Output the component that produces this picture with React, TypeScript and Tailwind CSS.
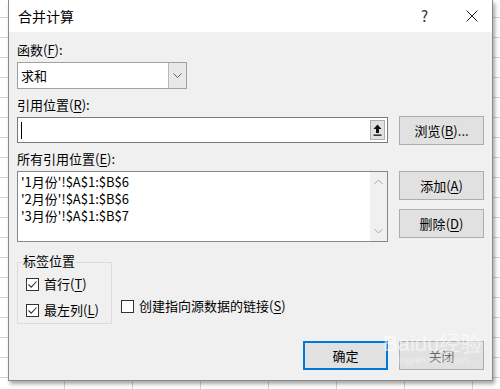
const FONT = "font-['Microsoft_YaHei_UI','Noto_Sans_CJK_SC','Noto_Sans',sans-serif]";

function Mn({ c }: { c: string }) {
  return (
    <>
      (<span className="underline underline-offset-2">{c}</span>)
    </>
  );
}

function WinButton({ children, primary = false, faded = false }: { children: React.ReactNode; primary?: boolean; faded?: boolean }) {
  return (
    <div
      className={`flex h-[29px] w-[85px] items-center justify-center bg-[#e1e1e1] text-[13px] ${
        primary ? 'border-2 border-[#0078d7]' : 'border border-[#adadad]'
      } ${faded ? 'text-[#6d6d6d]' : 'text-black'}`}
    >
      {children}
    </div>
  );
}

function CheckBox({ checked, label }: { checked: boolean; label: React.ReactNode }) {
  return (
    <div className="flex items-center gap-[5px] text-[13px] leading-[18px]">
      <div className="flex h-[13px] w-[13px] items-center justify-center border border-[#333] bg-white">
        {checked && (
          <svg width="11" height="11" viewBox="0 0 11 11">
            <path d="M1.5 5.5 L4.2 8.2 L9.5 2.5" fill="none" stroke="#333" strokeWidth="1.1" />
          </svg>
        )}
      </div>
      <span>{label}</span>
    </div>
  );
}

export default function App() {
  return (
    <div
      className={`${FONT} h-[389px] w-[500px] overflow-hidden bg-white bg-[linear-gradient(#d4d4d4_1px,transparent_1px),linear-gradient(90deg,#d4d4d4_1px,transparent_1px)] bg-[size:68px_20px] bg-[position:-4px_-3px]`}
    >
      <div className="relative ml-[8px] flex h-[381px] w-[485px] flex-col border-r border-b border-l border-[#8a8a8a] bg-[#f0f0f0] text-black shadow-[2px_3px_4px_rgba(0,0,0,0.35)]">
        {/* title bar */}
        <div className="flex h-[32px] items-center bg-white pl-[9px] pr-[14px]">
          <span className="text-[14px]">合并计算</span>
          <span className="ml-auto mr-[38px] text-[15px] text-[#333]">?</span>
          <svg width="12" height="12" viewBox="0 0 12 12">
            <path d="M0.5 0.5 L11.5 11.5 M11.5 0.5 L0.5 11.5" stroke="#222" strokeWidth="1" />
          </svg>
        </div>

        <div className="flex flex-col px-[8px]">
          <div className="mt-[9px] h-[18px] text-[13px] leading-[18px]">
            函数<Mn c="F" />:
          </div>
          <div className="mt-[3px] flex h-[27px] w-[170px] border border-[#a0a0a0] bg-white">
            <div className="flex-1 pl-[3px] text-[13px] leading-[25px]">求和</div>
            <div className="flex w-[18px] items-center justify-center border-l border-[#b8b8b8] bg-[#e8e8e8]">
              <svg width="9" height="6" viewBox="0 0 9 6">
                <path d="M0.5 0.5 L4.5 4.5 L8.5 0.5" fill="none" stroke="#606060" strokeWidth="1" />
              </svg>
            </div>
          </div>

          <div className="mt-[7px] h-[18px] text-[13px] leading-[18px]">
            引用位置<Mn c="R" />:
          </div>
          <div className="mt-[3px] flex gap-[11px]">
            <div className="flex h-[26px] w-[374px] items-stretch border border-[#7a7a7a] bg-white">
              <div className="flex flex-1 items-center pl-[3px]">
                <div className="h-[17px] w-px bg-black" />
              </div>
              <div className="m-[2px] flex w-[15px] items-center justify-center border border-[#adadad] bg-[#e1e1e1]">
                <svg width="9" height="12" viewBox="0 0 9 12">
                  <path d="M4.5 0.5 L8.5 5 L6 5 L6 9 L3 9 L3 5 L0.5 5 Z" fill="#111" />
                  <rect x="0.5" y="10.5" width="8" height="1.3" fill="#111" />
                </svg>
              </div>
            </div>
            <div className="-mt-px">
              <WinButton>
                浏览<Mn c="B" />...
              </WinButton>
            </div>
          </div>

          <div className="mt-[5px] h-[18px] text-[13px] leading-[18px]">
            所有引用位置<Mn c="E" />:
          </div>
          <div className="mt-[3px] flex gap-[11px]">
            <div className="flex h-[71px] w-[374px] border border-[#828790] bg-white">
              <div className="flex-1 pl-[3px] pt-[1px] text-[13px] leading-[17px]">
                <div>'1月份'!$A$1:$B$6</div>
                <div>'2月份'!$A$1:$B$6</div>
                <div>'3月份'!$A$1:$B$7</div>
              </div>
              <div className="flex w-[17px] flex-col items-center justify-between bg-[#f0f0f0] py-[7px]">
                <svg width="9" height="6" viewBox="0 0 9 6">
                  <path d="M0.5 5 L4.5 1 L8.5 5" fill="none" stroke="#a6a6a6" strokeWidth="1" />
                </svg>
                <svg width="9" height="6" viewBox="0 0 9 6">
                  <path d="M0.5 1 L4.5 5 L8.5 1" fill="none" stroke="#a6a6a6" strokeWidth="1" />
                </svg>
              </div>
            </div>
            <div className="flex flex-col gap-[9px]">
              <WinButton>
                添加<Mn c="A" />
              </WinButton>
              <WinButton>
                删除<Mn c="D" />
              </WinButton>
            </div>
          </div>

          <div className="mt-[12px] flex items-end">
            <div className="relative h-[70px] w-[95px] pt-[8px]">
              <div className="flex h-full flex-col gap-[8px] border border-[#dcdcdc] pl-[8px] pt-[12px]">
                <CheckBox checked label={<>首行<Mn c="T" /></>} />
                <CheckBox checked label={<>最左列<Mn c="L" /></>} />
              </div>
              <span className="absolute left-[5px] top-[-2px] bg-[#f0f0f0] px-[1px] text-[13px] leading-[18px]">
                标签位置
              </span>
            </div>
            <div className="mb-[9px] ml-[9px]">
              <CheckBox checked={false} label={<>创建指向源数据的链接<Mn c="S" /></>} />
            </div>
          </div>

          <div className="mt-[17px] flex justify-end gap-[11px]">
            <div className="w-[85px]">
              <WinButton primary>确定</WinButton>
            </div>
            <WinButton faded>
              关闭
            </WinButton>
          </div>
        </div>

        {/* watermark */}
        <div className="pointer-events-none absolute left-[374px] top-[333px] flex flex-col items-center text-white/55">
          <span className="font-['Liberation_Sans',sans-serif] text-[22px] leading-[22px]">
            Baidu经验
          </span>
          <span className="font-['Liberation_Sans',sans-serif] text-[9px] leading-[10px] text-white/45">jingyan.baidu.com</span>
        </div>
      </div>
    </div>
  );
}
